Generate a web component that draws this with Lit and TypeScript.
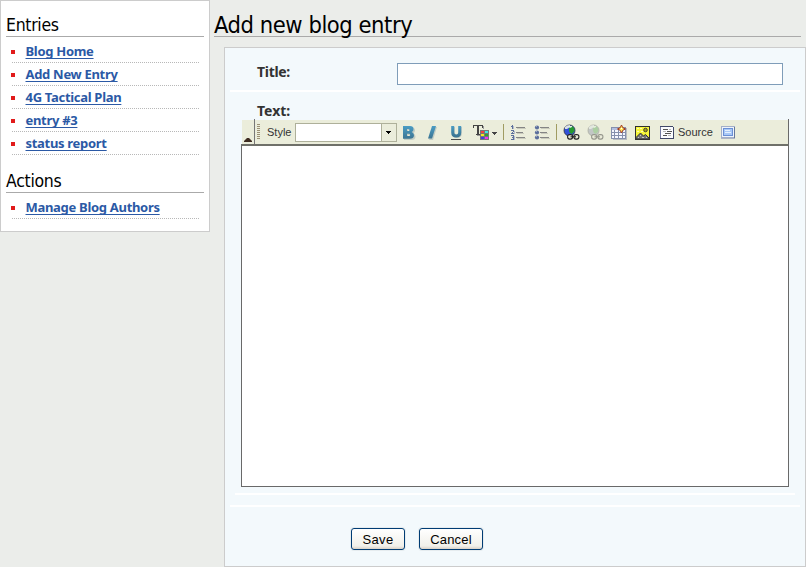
import { LitElement, html, css, svg } from "lit";
import { customElement } from "lit/decorators.js";

const icon = (body: unknown, w = 16) => html`<svg width=${w} height="18" viewBox="0 0 ${w} 18" shape-rendering="crispEdges">${body}</svg>`;

const textDefs = svg`<defs><linearGradient id="g" x1="0" y1="0" x2="0" y2="1"><stop offset="0" stop-color="#4a9cc4"/><stop offset="1" stop-color="#3c7593"/></linearGradient></defs>`;

const bold = icon(svg`${textDefs}<path shape-rendering="auto" fill="#c3ccc3" transform="translate(1 1)" fill-rule="evenodd" d="M2 3h7q4 0 4 3.500q0 2-2 2.700q2.500.8 2.500 3.300q0 3.500-4.500 3.500H2zM6 6v2h2q1 0 1-1t-1-1zM6 11v2.500h2q1.500 0 1.500-1.200T8 11z"/>
<path shape-rendering="auto" fill="url(#g)" fill-rule="evenodd" d="M2 3h7q3.500 0 3.500 3.200q0 2-1.800 2.700q2.300.8 2.300 3.300q0 3.500-4.500 3.500H2zM6 6v2h1.500q1 0 1-1t-1-1zM6 10.700v2.300h2q1.200 0 1.200-1.100T8 10.700z"/>`);
const italic = icon(svg`${textDefs}<path shape-rendering="auto" fill="#c3ccc3" d="M8 4h4L8 17H4z"/><path shape-rendering="auto" fill="url(#g)" d="M7 3h4L7 15.500H3z"/>`);
const underline = icon(svg`${textDefs}<path shape-rendering="auto" fill="none" stroke="#c3ccc3" stroke-width="3" d="M4.500 4v6q0 3.500 3.500 3.500t3.500-3.500V4"/><path shape-rendering="auto" fill="none" stroke="url(#g)" stroke-width="3" d="M3.700 3v6.500q0 3.500 3.500 3.500t3.500-3.500V3"/><path fill="#4d4d4d" d="M2 16h10v1H2z"/>`);

const textColor = icon(svg`<path fill="#444" d="M0 2h10v3H9V3H6v8h1v1H3v-1h1V3H1v2H0z"/>
<path fill="#999" d="M10 3h1v3h-1zM6 12h2v1H4v-1z"/>
<path fill="#777" d="M7 7h9v10H7z"/>
<path fill="#f04040" d="M8 8h3v2H8z"/><path fill="#40e8e8" d="M12 8h3v2h-3z"/>
<path fill="#f0e820" d="M8 11h3v2H8z"/><path fill="#30a030" d="M12 11h3v2h-3z"/>
<path fill="#4040e0" d="M8 14h3v2H8z"/><path fill="#f030f0" d="M12 14h3v2h-3z"/>
<path fill="#444" d="M19 9h5v1h-5zM20 10h3v1h-3zM21 11h1v1h-1z"/>`, 25);

const listLines = svg`<path fill="#858585" d="M6 4h9v1H6zM6 9h7v1H6zM6 14h9v1H6z"/><path fill="#c9cbbc" d="M7 5h9v1H7zM7 10h7v1H7zM7 15h9v1H7z"/>`;
const ordered = icon(svg`${listLines}<path fill="#5c6f9c" d="M2 2h1v4H2zM1 3h1v1H1zM1 7h3v1H1zM3 8h1v1H3zM2 9h1v1H2zM1 10h3v1H1zM1 12h3v1H1zM3 13h1v3H3zM2 14h1v1H2zM1 16h3v1H1z"/><path fill="#b4bccb" d="M3 3h1v3H3zM4 8h1v3H4zM4 13h1v4H4z"/>`);
const ball = (y: number) => svg`<circle shape-rendering="auto" cx="3" cy=${y} r="2.100" fill="#5c6f9c"/><path fill="#98a8c8" d="M2 ${y - 1.5}h1v1H2z"/>`;
const bullets = icon(svg`${listLines}${[4.5, 9.5, 14.5].map(ball)}`);

const globe = (faded: boolean) => icon(svg`<g opacity=${faded ? 0.42 : 1} shape-rendering="auto">
<circle cx="6.500" cy="7.500" r="5.500" fill=${faded ? "#8a92a8" : "#3150d8"} stroke=${faded ? "#555" : "#333"} stroke-width=".8"/>
<path fill="#d8dfe8" d="M2 4q2-2 5-2v2L4 6H2z"/>
<path fill=${faded ? "#58a858" : "#269a30"} d="M6 5l3-2 2 2 .5 3-2.500 3-2-1-1-2z"/>
<path fill="#dff3e0" d="M5 3h4v1l-2 1z"/>
<g fill="none" stroke="#222" stroke-width="1.100"><rect x="4.600" y="11.600" width="5" height="4.500" rx="2" fill="#e7e8d5"/><rect x="10.900" y="11.600" width="5" height="4.500" rx="2" fill="#e7e8d5"/><path d="M7.500 13.800h5.500"/></g></g>`, 17);

const table = icon(svg`<path fill="#b8bcc0" d="M2 5h14v12H2z"/><path fill="#8590ad" d="M0 4h15v12H0z"/><path fill="#b3c0e0" d="M1 5h13v2H1z"/>
<path fill="#f5f7ff" d="M1 7h2v2H1zM4 7h3v2H4zM8 7h3v2H8zM12 7h2v2h-2zM1 10h2v2H1zM4 10h3v2H4zM8 10h3v2H8zM12 10h2v2h-2zM1 13h2v2H1zM4 13h3v2H4zM8 13h3v2H8zM12 13h2v2h-2z"/>
<path shape-rendering="auto" fill="#ffe95a" stroke="#a33b24" d="M10.500 2l1.300 2.700 2.700 1.300-2.700 1.300-1.300 2.700-1.300-2.700-2.700-1.300 2.700-1.300z"/><path fill="#fff" d="M10 5h1v1h-1z"/>`);

const picture = icon(svg`<path fill="#303030" d="M0 3h15v14H0z"/><path fill="#f7f73a" d="M1 4h13v12H1z"/><path fill="#fffcb0" d="M2 5h2v1H2zM5 5h2v1H5zM2 8h2v1H2zM6 8h2v1H6z"/>
<path shape-rendering="auto" fill="#777" stroke="#333" d="M1 14.500L5.500 10l3 3 2-1.500L14 15v1H1z"/><path fill="#c8c8c8" d="M5 12h1v1H5zM7 14h2v1H7zM3 14h1v1H3zM11 14h1v1h-1z"/>
<circle shape-rendering="auto" cx="10.500" cy="7" r="1.800" fill="#a89c20" stroke="#333" stroke-width=".9"/>`);

const source = icon(svg`<path fill="#7279a0" d="M1 4h14v12H1z"/><path fill="#404868" d="M1 3h13v1H1zM14 4h1v12h-1zM1 15h14v1H1z"/><path fill="#fbfcff" d="M2 4h12v11H2z"/><path fill="#555" d="M4 6h5v1H4zM8 8h5v1H8zM6 10h6v1H6zM4 12h4v1H4z"/><path fill="#bbb" d="M10 6h2v1h-2zM4 8h3v1H4zM9 12h3v1H9z"/>`);

const fit = icon(svg`<path fill="#a3afc8" d="M1 3h14v12H1z"/><path fill="#66789c" d="M14 4h1v11h-1z"/><path fill="#eef3fb" d="M2 4h12v10H2z"/><path fill="#6b90d6" d="M3 5h10v8H3z"/><path fill="#a9c8f6" d="M4 6h8v6H4z"/><path fill="#e4f0ff" d="M5 7h5v1H5zM5 9h6v1H5z"/><path fill="#aeb5c4" d="M1 15h14v1H1z"/>`);

@customElement("app-root")
export class AppRoot extends LitElement {
  static styles = css`
    :host { display: block; height: 576px; background: #fff; font-family: "Noto Sans", sans-serif; color: #333; }
    * { box-sizing: border-box; }
    svg { display: block; flex: none; }
    .page { display: flex; align-items: flex-start; height: 567px; background: #ebedea; }
    .side { width: 210px; height: 232px; border: 1px solid #ccc; background: #fff; padding: 8px 5px 0; flex: none; }
    h2 { margin: 0; height: 28px; border-bottom: 1px solid #aaa; color: #000; font: 17.500px/32px "DejaVu Sans Condensed", "DejaVu Sans", sans-serif; font-stretch: condensed; white-space: nowrap; letter-spacing: -.3px; }
    .actions { margin-top: 10px; }
    ul { list-style: none; margin: 3px 5px 0 6px; padding: 0; }
    li { height: 23px; border-bottom: 1px dotted #b8b8b8; display: flex; align-items: center; }
    li::before { content: ""; width: 4px; height: 4px; background: #e11b1b; margin: 1px 10.500px 0 -1px; flex: none; }
    a { color: #2b59a5; font: bold 13px/20px "Noto Sans", sans-serif; letter-spacing: -.3px; text-decoration: underline; text-underline-offset: 2px; text-decoration-thickness: 1px; text-decoration-skip-ink: none; white-space: nowrap; }
    .main { flex: 1; padding-left: 4px; }
    h1 { margin: 0 5px 10px 0; height: 37px; border-bottom: 1px solid #aaa; color: #000; font: 23.500px/50px "DejaVu Sans Condensed", "DejaVu Sans", sans-serif; font-stretch: condensed; letter-spacing: -.45px; white-space: nowrap; }
    .panel { margin-left: 10px; height: 520px; border: 1px solid #ccc; background: #f3f9fc; padding: 0 5px; }
    .title { height: 44px; display: flex; border-bottom: 2px solid #fff; padding: 15px 17px 0 27px; }
    label { font: bold 14px/20px "Noto Sans", sans-serif; letter-spacing: -.3px; width: 140px; }
    .title label { margin-top: -1px; }
    input { width: 386px; height: 22px; border: 1px solid #7f9db9; background: #fff; border-radius: 0; margin: 0; padding: 2px; outline: none; }
    .text { margin: 0 5px; height: 403px; border-bottom: 2px solid #fff; padding: 8px 6px 0; }
    .text label { display: block; height: 19px; padding-left: 16px; line-height: 22px; letter-spacing: 0; }
    .editor { width: 548px; height: 368px; display: flex; flex-direction: column; }
    .bar { display: flex; align-items: center; height: 25px; background: linear-gradient(#f3f9fc 1px, #ebeddb 1px); margin-left: 1px; border-right: 1px solid #696969; font: 11px/18px "Liberation Sans", sans-serif; color: #333; }
    .fold { width: 13px; height: 25px; border-right: 1px solid #777; padding: 19px 0 0 2px; flex: none; }
    .grip { width: 3px; height: 16px; margin: 0 7px 0 2px; background: repeating-linear-gradient(#9c9075 0 1px, transparent 1px 2px); }
    .style { width: 28px; }
    .select { width: 102px; height: 19px; border: 1px solid #aeb09a; background: #fff; display: flex; justify-content: flex-end; margin: 1px 4px 0 0; flex: none; }
    .drop { width: 15px; border-left: 1px solid #aeb09a; background: #ebeddb; padding: 7px 0 0 4px; }
    .tools { display: flex; gap: 8px; height: 18px; }
    .sep { width: 1px; height: 16px; margin: 1px 6px 0 5px; background: #a09c62; flex: none; }
    .late { margin-left: 6px; }
    .pad { width: 7px; }
    .src { width: 45px; padding-left: 3px; }
    .canvas { flex: 1; background: #fff; border: 1px solid #696969; border-top: 2px solid #6f7069; }
    .rule { height: 12px; border-bottom: 2px solid #fff; }
    .buttons { display: flex; gap: 14px; padding: 21px 0 0 121px; }
    button { height: 22px; padding: 1px 0 0; border: 1px solid #003c74; border-radius: 3px; background: linear-gradient(#fff, #f1f0ea 85%, #d9d1c7); color: #000; font: 13px/20px "Liberation Sans", sans-serif; box-shadow: 0 0 0 1px #e6ecef; }
    .save { width: 54px; letter-spacing: .35px; }
    .cancel { width: 64px; letter-spacing: .15px; }
    .group { display: flex; gap: 7px; }
  `;

  private entries = ["Blog Home", "Add New Entry", "4G Tactical Plan", "entry #3", "status report"];

  render() {
    const list = (items: string[]) => html`<ul>${items.map((t) => html`<li><a>${t}</a></li>`)}</ul>`;
    return html`<div class="page">
      <aside class="side">
        <h2>Entries</h2>${list(this.entries)}
        <h2 class="actions">Actions</h2>${list(["Manage Blog Authors"])}
      </aside>
      <main class="main">
        <h1>Add new blog entry</h1>
        <section class="panel">
          <div class="title"><label>Title:</label><input type="text" /></div>
          <div class="text">
            <label>Text:</label>
            <div class="editor">
              <div class="bar">
                <div class="fold"><svg width="8" height="4" viewBox="0 0 8 4"><path fill="#3d2b20" d="M0 4V3L3 0h2l3 3v1z"/></svg></div>
                <div class="grip"></div><span class="style">Style</span>
                <div class="select"><div class="drop"><svg width="5" height="3" viewBox="0 0 5 3" shape-rendering="crispEdges"><path d="M0 0h5v1H0zM1 1h3v1H1zM2 2h1v1H2z"/></svg></div></div>
                <div class="tools">${bold}${italic}${underline}${textColor}</div>
                <i class="sep"></i>
                <div class="tools">${ordered}${bullets}</div>
                <i class="sep late"></i>
                <div class="group">${globe(false)}${globe(true)}</div>
                <i class="pad"></i>
                <div class="tools">${table}${picture}${source}</div>
                <span class="src">Source</span>${fit}
              </div>
              <div class="canvas"></div>
            </div>
          </div>
          <div class="rule"></div>
          <div class="buttons"><button class="save">Save</button><button class="cancel">Cancel</button></div>
        </section>
      </main>
    </div>`;
  }
}
